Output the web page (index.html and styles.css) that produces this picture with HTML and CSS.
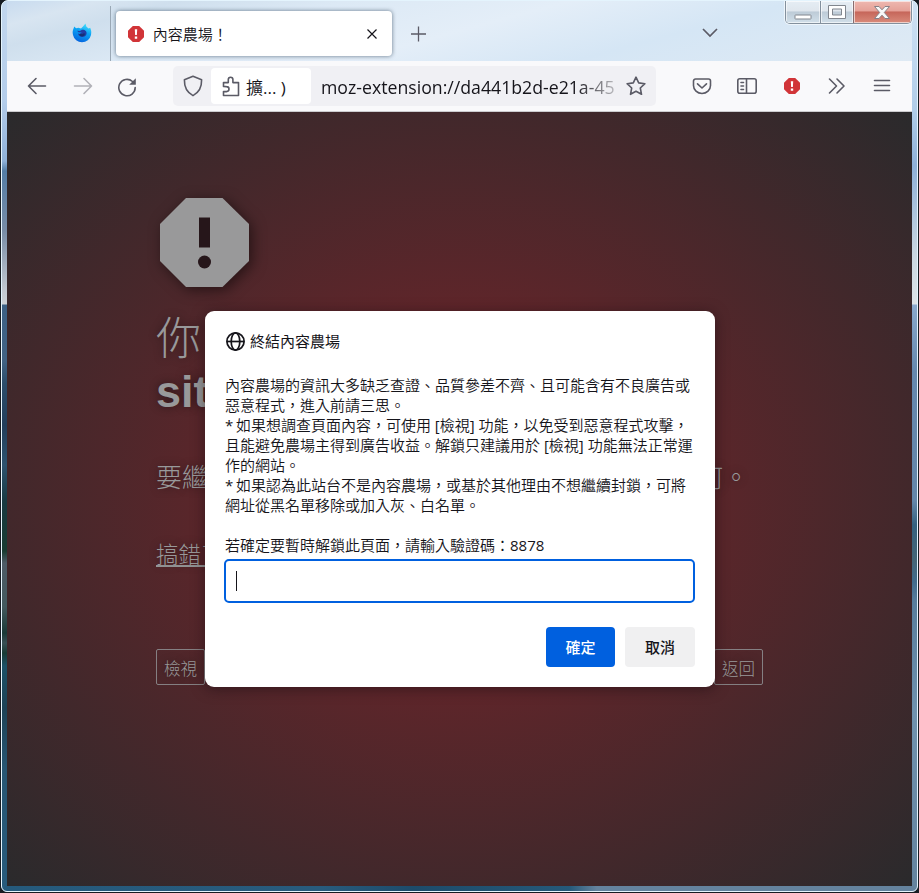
FILE: index.html
```html
<!DOCTYPE html>
<html lang="zh-TW">
<head>
<meta charset="utf-8">
<title>內容農場！</title>
<link rel="stylesheet" href="styles.css">
</head>
<body>
<div class="window">
  <header class="titlebar">
    <div class="pinned">
      <svg width="20" height="20" viewBox="0 0 20 20">
        <defs>
          <linearGradient id="fx" x1="0.8" y1="0" x2="0.4" y2="1"><stop offset="0" stop-color="#50e6fa"/><stop offset=".45" stop-color="#0ba4f5"/><stop offset="1" stop-color="#0565df"/></linearGradient>
        </defs>
        <path d="M1 7 2.3 3.4 4 5.3 6.5 4.8 9 5.5 11 3.5 13.5 0.5 14.3 3.6 16.5 5.5 18.2 4.8C19.2 7 19.6 9 19 12A9.2 9.2 0 0 1 1 12C.6 10 .5 8.5 1 7Z" fill="url(#fx)"/>
        <path d="M5 7.8 8 8 10 6.7C13 6.4 15 8.2 14.5 11 13.6 15 6.6 15 6 10.5L8 11 9.7 9.5 6.5 9.2Z" fill="#213da5"/>
        <path d="M8 11C9 13 12 12.5 12 10.5" fill="none" stroke="#163072" stroke-width="2"/>
      </svg>
    </div>
    <div class="tab">
      <svg class="tab-icon" width="16" height="16" viewBox="0 0 16 16"><path d="M4.8 0h6.4L16 4.8v6.4L11.2 16H4.8L0 11.2V4.8z" fill="#d13438"/><path d="M6.8 3.2h2.4L8.9 9H7.1zM6.8 10.5h2.4v2.2H6.8z" fill="#fff"/></svg>
      <span class="tab-title">內容農場！</span>
      <svg class="tab-close" width="10" height="10" viewBox="0 0 10 10"><path d="M.5.5l9 9M9.500.5l-9 9" stroke="#15141a" stroke-width="1.2"/></svg>
    </div>
    <svg class="new-tab" width="16" height="16" viewBox="0 0 16 16"><path d="M7.500 .5v15M0 8h15" stroke="#5b5b66" stroke-width="1.3"/></svg>
    <svg class="all-tabs" width="16" height="10" viewBox="0 0 16 10"><path d="M1 1l7 7 7-7" fill="none" stroke="#5b5b66" stroke-width="1.7"/></svg>
    <div class="controls">
      <span class="control minimize"><svg width="18" height="6" viewBox="0 0 18 6"><rect x="1" y="1" width="16" height="4" rx=".5" fill="#fff" stroke="#81868e"/></svg></span>
      <span class="control maximize"><svg width="18" height="14" viewBox="0 0 18 14"><path d="M.5.5h17v13H.5zM4.500 4v6h9V4z" fill="#fff" fill-rule="evenodd" stroke="#81868e"/></svg></span>
      <span class="control close"><svg width="18" height="15" viewBox="0 0 18 15"><path d="M1.500 1.500h4.500l3 3.300 3-3.300h4.500l-5.200 6 5.200 6H12l-3-3.300-3 3.300H1.500l5.200-6z" fill="#f8f8f8" stroke="#858087"/></svg></span>
    </div>
  </header>

  <nav class="toolbar">
    <svg class="back" width="20" height="18" viewBox="0 0 20 18"><path d="M18.500 9H1.500M9 1.500L1.500 9 9 16.500" class="line"/></svg>
    <svg class="forward" width="20" height="18" viewBox="0 0 20 18"><path d="M1.500 9h17M11 1.500L18.500 9 11 16.500" class="line"/></svg>
    <svg class="reload" width="20" height="20" viewBox="0 0 20 20"><path d="M18.200 10.500A8.200 8.200 0 1 1 15.500 4.500" class="line"/><path d="M18.800 1.200v6.600h-6.600z" fill="#5b5b66"/></svg>
    <div class="urlbar">
      <svg class="shield" width="20" height="22" viewBox="0 0 20 22"><path d="M10 1.300L18.600 4.800C18.800 12 16 17.500 10 20.600 4 17.500 1.200 12 1.400 4.800z" class="line"/></svg>
      <div class="identity">
        <svg width="18" height="21" viewBox="0 0 18 21"><path d="M1.500 10.500V6.600h4.800V3.500a2.300 2.300 0 0 1 4.600 0v3.100h5.600v12.900h-15v-3.900h3a2.500 2.500 0 0 0 0-5z" class="line"/></svg>
        <span>擴<span class="latin">... )</span></span>
      </div>
      <span class="url">moz-extension://da441b2d-e21a-45</span>
      <svg class="star" width="20" height="20" viewBox="0 0 20 20"><path d="M10 1.200l2.700 5.700 6.200.8-4.600 4.300 1.200 6.300-5.500-3.100-5.500 3.100 1.200-6.300L1.100 7.700l6.200-.8z" class="line"/></svg>
    </div>
    <div class="tools">
      <svg width="20" height="20" viewBox="0 0 20 20"><path d="M3.500 3h13a2 2 0 0 1 2 2v4.500a8.500 8 0 0 1-17 0V5a2 2 0 0 1 2-2zM5.500 7.800L10 12l4.500-4.200" class="line"/></svg>
      <svg width="20" height="20" viewBox="0 0 20 20"><rect x=".8" y="2.800" width="18.400" height="14.400" rx="2" class="line"/><path d="M9.500 3v14M4 6.500h2.500M4 10h2.500M4 13.500h2.500" class="line"/></svg>
      <svg width="20" height="20" viewBox="-2 -2 20 20"><path d="M4.800 0h6.400L16 4.800v6.400L11.200 16H4.800L0 11.200V4.800z" fill="#d13438"/><path d="M6.800 3.200h2.400L8.900 9H7.100zM6.800 10.500h2.400v2.200H6.800z" fill="#fff"/></svg>
      <svg width="20" height="20" viewBox="0 0 20 20"><path d="M2.500 3l7 7-7 7M10 3l7 7-7 7" class="line"/></svg>
      <svg width="20" height="20" viewBox="0 0 20 20"><path d="M2.500 4.500h15M2.500 9.500h15M2.500 14.500h15" class="line"/></svg>
    </div>
  </nav>

  <main class="page">
    <svg class="warning" width="98" height="92" viewBox="0 0 98 92"><path d="M30 1h36.500L93 27v37L66.500 90H30L4 64V27z" fill="#99999a"/><path d="M43 20.500h11v30H43z" fill="#26161a"/><circle cx="48.500" cy="65" r="6.500" fill="#26161a"/></svg>
    <h1>你<br><b>sit</b></h1>
    <p class="question"><span>要繼</span><span>何。</span></p>
    <a class="mistake">搞錯了</a>
    <div class="actions"><span class="action">檢視</span><span class="action">返回</span></div>
  </main>

  <section class="dialog">
    <div class="dialog-title">
      <svg width="20" height="20" viewBox="0 0 20 20"><g fill="none" stroke="#15141a" stroke-width="1.700"><circle cx="10.500" cy="10.500" r="8.600"/><ellipse cx="10.500" cy="10.500" rx="4.300" ry="8.600"/><path d="M1.900 10.500h17.200"/></g></svg>
      <span>終結內容農場</span>
    </div>
    <div class="message">
      <div>內容農場的資訊大多缺乏查證、品質參差不齊、且可能含有不良廣告或</div>
      <div>惡意程式，進入前請三思。</div>
      <div><span class="latin bullet">*</span> 如果想調查頁面內容，可使用 <span class="latin">[</span>檢視<span class="latin">]</span> 功能，以免受到惡意程式攻擊，</div>
      <div>且能避免農場主得到廣告收益。解鎖只建議用於 <span class="latin">[</span>檢視<span class="latin">]</span> 功能無法正常運</div>
      <div>作的網站。</div>
      <div><span class="latin bullet">*</span> 如果認為此站台不是內容農場，或基於其他理由不想繼續封鎖，可將</div>
      <div>網址從黑名單移除或加入灰、白名單。</div>
      <div class="prompt">若確定要暫時解鎖此頁面，請輸入驗證碼：<span class="latin">8878</span></div>
    </div>
    <div class="field"><span class="caret"></span></div>
    <div class="buttons"><span class="button primary">確定</span><span class="button">取消</span></div>
  </section>
</div>
</body>
</html>
```
FILE: styles.css
```css
* { box-sizing: border-box; }
body {
  margin: 0;
  background: #171c22;
  font-family: "Open Sans", "Noto Sans CJK TC", sans-serif;
  color: #15141a;
}
svg { display: block; flex: none; }
.line { fill: none; stroke: #5b5b66; stroke-width: 1.6; stroke-linejoin: round; stroke-linecap: round; }
.latin { font-weight: 400; }

.window {
  position: relative;
  width: 917px;
  height: 892px;
  margin-left: 1px;
  padding: 0 5px 5px 5px;
  border: 1px solid #e4f4fd;
  border-radius: 7px 7px 6px 6px;
  overflow: hidden;
  background:
    linear-gradient(90deg, #255a7c 0, #285b7d 35%, #1d4b6a 45%, #255979 62%, #64839e 65%, #64839e) bottom / 100% 5px no-repeat,
    linear-gradient(#c2d7ee 0, #b4cdea 100px, #8fb1d8 160px, #537da6 170px, #788ca6 230px, #c3c9d1 290px, #ccd0d5 303px, #3c6084 304px, #416283 360px, #2b4d6b 382px, #223e5b 424px, #2d536f 464px, #183a42 500px, #193b31 550px, #4d5b66 562px, #43595e 606px, #1a3937 632px, #384f54 642px, #183b35 652px, #1c5167 665px, #1d4256 707px, #275673 768px, #275b7c 100%) 0 0 / 6px 100% no-repeat,
    linear-gradient(#cfe1f3 0, #c0d8ef 60px, #b0cce8 110px, #8eb0d8 165px, #cbd7e1 256px, #dde3e8 303px, #8aa9cd 304px, #6688ae 370px, #6486a9 500px, #35617f 524px, #456576 558px, #416b8c 581px, #587d9c 600px, #7092ae 712px, #64839e 100%) 100% 0 / 6px 100% no-repeat,
    #b9d2ea;
}

.titlebar {
  height: 60px;
  display: flex;
  align-items: flex-start;
  background: linear-gradient(165deg, #c8dbef 0, #d8e5f1 8%, #cfdfed 15%, #dce9f5 30%, #e4eef8 50%, #d5e6f5 70%, #dfeaf4 100%);
}
.pinned { width: 104px; height: 55px; margin-top: 5px; border-right: 1px solid #9aa8b5; padding: 17px 0 0 65px; }
.tab {
  display: flex;
  align-items: center;
  width: 277px;
  height: 45px;
  margin: 10px 0 0 5px;
  padding: 0 15px 0 12px;
  border-radius: 4px;
  background: #fff;
  box-shadow: 0 0 4px rgba(60, 80, 100, .75);
}
.tab-title { font-size: 15px; font-weight: 350; margin-left: 9px; line-height: 20px; }
.tab-close { margin-left: auto; }
.new-tab { margin: 25px 0 0 19px; }
.all-tabs { margin: 27px 0 0 275px; }
.controls {
  display: flex;
  width: 128px;
  height: 24px;
  margin: -1px 0 0 67px;
  border: 1px solid #83909d;
  border-top-color: #555a61;
  border-radius: 0 0 5px 5px;
  overflow: hidden;
  box-shadow: 0 0 0 1px #eef5fb;
}
.control {
  display: flex;
  justify-content: center;
  align-items: center;
  width: 34px;
  background: linear-gradient(#e5edf4 0, #dfe6ed 45%, #bdcbd7 50%, #d1dfe9);
  box-shadow: inset 0 0 0 1px rgba(255, 255, 255, .6);
}
.control.minimize { padding-top: 10px; }
.control.maximize { width: 33px; border-left: 1px solid #83909d; }
.control.close { flex: 1; border-left: 1px solid #876d70; background: linear-gradient(#eeb8b0 0, #e5a198 45%, #c6665a 50%, #d98b7b); }

.toolbar {
  height: 51px;
  display: flex;
  align-items: center;
  background: #f9f9fb;
  border-bottom: 1px solid #cccccf;
}
.back { margin-left: 20px; }
.forward { margin-left: 26px; opacity: .45; }
.reload { margin-left: 24px; margin-top: 2px; }
.urlbar {
  display: flex;
  align-items: center;
  width: 483px;
  height: 40px;
  margin-left: 36px;
  padding: 0 10px;
  border-radius: 5px;
  background: #f0f0f4;
}
.identity {
  display: flex;
  align-items: center;
  width: 100px;
  height: 36px;
  margin-left: 8px;
  padding-left: 11px;
  gap: 6px;
  border-radius: 4px;
  background: #fff;
  font-size: 17px;
  font-weight: 350;
  white-space: nowrap;
}
.url {
  width: 295px;
  margin-left: 10px;
  padding-top: 1px;
  font-size: 17.7px;
  white-space: nowrap;
  overflow: hidden;
  -webkit-mask-image: linear-gradient(90deg, #000 86%, transparent 104%);
  mask-image: linear-gradient(90deg, #000 86%, transparent 104%);
}
.star { margin-left: auto; }
.tools { display: flex; gap: 25px; margin-left: 36px; }

.page {
  height: 774px;
  padding: 85px 149px 0;
  background: radial-gradient(ellipse farthest-corner at center, #7a2329, #2a2a2c);
  color: #98999a;
  font-family: "Liberation Sans", "Noto Sans CJK TC", sans-serif;
  text-shadow: 0 0 10px rgba(0, 0, 0, .45);
}
.warning { filter: drop-shadow(3px 3px 7px rgba(0, 0, 0, .5)); }
h1 { margin: 25px 0 0; font-size: 45px; line-height: 52px; font-weight: 300; }
h1 b { font-weight: 700; }
.question {
  display: flex;
  justify-content: space-between;
  width: 593px;
  margin: 40px 0 0;
  font-size: 26px;
  line-height: 40px;
  font-weight: 300;
}
.mistake {
  display: block;
  width: fit-content;
  height: 24px;
  margin-top: 45px;
  font-size: 22.5px;
  line-height: 26px;
  font-weight: 300;
  border-bottom: 2px solid #98999a;
}
.actions { display: flex; justify-content: space-between; margin-top: 82px; }
.action {
  width: 49px;
  height: 36px;
  border: 1px solid #858083;
  border-radius: 2px;
  text-align: center;
  font-size: 16.500px;
  line-height: 38px;
  font-weight: 300;
}

.dialog {
  position: absolute;
  left: 203px;
  top: 310px;
  width: 510px;
  height: 376px;
  padding: 20px;
  border-radius: 9px;
  background: #fff;
  box-shadow: 0 2px 14px rgba(20, 10, 15, .5);
}
.dialog-title { display: flex; align-items: center; height: 20px; gap: 5px; font-size: 15px; line-height: 20px; font-weight: 400; }
.message { margin-top: 24px; font-size: 15px; font-weight: 350; line-height: 20px; white-space: nowrap; }
.message div { height: 20px; }
.message .bullet { display: inline-block; width: 7px; }
.message .prompt { margin-top: 20px; }
.field {
  width: 471px;
  height: 44px;
  margin: 4px 0 0 -1px;
  padding: 10px;
  border: 2px solid #0060df;
  border-radius: 5px;
}
.caret { display: block; width: 1px; height: 20px; background: #15141a; }
.buttons { display: flex; justify-content: flex-end; gap: 10px; margin-top: 24px; }
.button {
  width: 70px;
  height: 40px;
  border-radius: 4px;
  background: #f0f0f1;
  text-align: center;
  font-size: 15px;
  line-height: 40px;
  font-weight: 500;
}
.primary { width: 69px; background: #0060df; color: #fff; }
```
